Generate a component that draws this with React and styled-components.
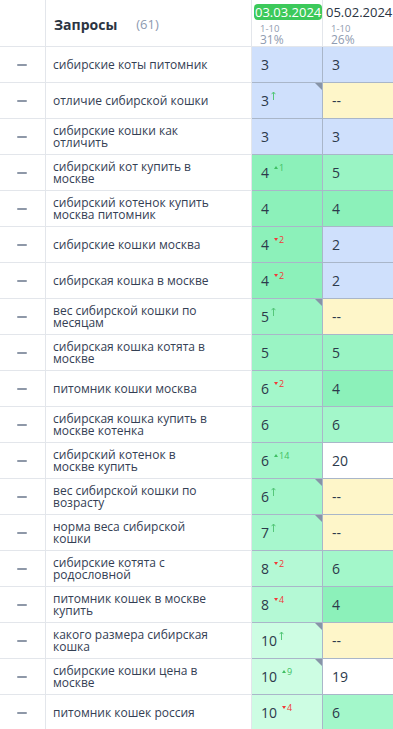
import React from "react";
import styled, { createGlobalStyle } from "styled-components";

const Global = createGlobalStyle`
  html, body { margin: 0; padding: 0; background: #ffffff; }
  body { font-family: "Open Sans", "Liberation Sans", sans-serif; }
  * { box-sizing: border-box; }
`;

const COLORS = {
  blue: "#cfe0fc",
  yellow: "#fef6c9",
  white: "#ffffff",
  g4: "#8cf1ba",
  g5: "#9af4c4",
  g6: "#a3f7ca",
  g7: "#a7f7cd",
  g8: "#b4f9d5",
  g10: "#cdfde3",
};

const LIGHT = "#e3e6eb";
const SLATE = "#a9b6c9";

const Table = styled.div`
  width: 393px;
  display: flex;
  flex-direction: column;
`;

const Grid = styled.div`
  display: grid;
  grid-template-columns: 46px 206px 71px 70px;
  height: ${(p) => p.$h}px;
`;

const HeadCell = styled.div`
  border-bottom: 1px solid ${LIGHT};
  border-right: ${(p) => (p.$last ? "none" : `1px solid ${LIGHT}`)};
  display: flex;
`;

const TitleCell = styled(HeadCell)`
  align-items: center;
  padding: 2px 0 0 8px;
`;

const Title = styled.span`
  font-weight: 700;
  font-size: 14px;
  color: #2b3442;
`;

const Count = styled.span`
  margin-left: 19px;
  font-size: 13px;
  color: #8d9ab0;
`;

const DateCell = styled(HeadCell)`
  flex-direction: column;
  padding: 4px 0 0 2px;
`;

const DateBadge = styled.span`
  align-self: flex-start;
  font-size: 13px;
  line-height: 16px;
  padding: 0 1px;
  border-radius: 4px;
  color: ${(p) => (p.$active ? "#ffffff" : "#2b3442")};
  background: ${(p) => (p.$active ? "#3cc95a" : "transparent")};
`;

const Range = styled.span`
  font-size: 9.5px;
  line-height: 11px;
  margin: 3px 0 0 6px;
  color: #8f9bb0;
`;

const Percent = styled.span`
  font-size: 12px;
  line-height: 12px;
  margin-left: 6px;
  color: #8f9bb0;
`;

const IconCell = styled.div`
  border-right: 1px solid ${LIGHT};
  border-bottom: 1px solid ${LIGHT};
  display: flex;
  align-items: center;
  justify-content: center;
  padding-right: 2px;
`;

const Dash = styled.span`
  width: 10px;
  height: 2px;
  border-radius: 1px;
  background: #8e98a8;
`;

const QueryCell = styled.div`
  border-right: 1px solid ${LIGHT};
  border-bottom: 1px solid ${LIGHT};
  display: flex;
  align-items: center;
  padding: 0 40px 0 7px;
  font-size: 12px;
  line-height: 12px;
  color: #344054;
`;

const PosCell = styled.div`
  position: relative;
  background: ${(p) => COLORS[p.$c]};
  border-bottom: 1px solid ${SLATE};
  border-right: ${(p) => (p.$last ? "none" : `1px solid ${SLATE}`)};
  display: flex;
  align-items: center;
  padding-left: 9px;
  font-size: 14px;
  color: #2c3a4b;
`;

const Corner = styled.span`
  position: absolute;
  top: 0;
  right: 0;
  width: 0;
  height: 0;
  border-top: 7px solid #8794a7;
  border-left: 7px solid transparent;
`;

const Delta = styled.sup`
  display: inline-flex;
  align-items: center;
  gap: 1px;
  margin-left: ${(p) => (p.$arrow ? 2 : 5)}px;
  font-size: 9px;
  line-height: 9px;
  vertical-align: 6px;
  color: ${(p) => (p.$up ? "#3fbf63" : "#f23838")};
`;

const Value = styled.span`
  display: inline-flex;
  align-items: flex-start;
`;

const UpArrow = () => (
  <svg width="5" height="9" viewBox="0 0 5 9">
    <path d="M2.5 9V1M0.6 3.2L2.5 1L4.4 3.2" stroke="#55c77a" strokeWidth="1" fill="none" />
  </svg>
);

const Tri = ({ up }) => (
  <svg width="4" height="3" viewBox="0 0 4 3">
    <path d={up ? "M0 3L2 0L4 3Z" : "M0 0L4 0L2 3Z"} fill="currentColor" />
  </svg>
);

const rows = [
  ["сибирские коты питомник", { v: "3", c: "blue" }, { v: "3", c: "blue" }],
  ["отличие сибирской кошки", { v: "3", c: "blue", arrow: true, corner: true }, { v: "--", c: "yellow" }],
  ["сибирские кошки как отличить", { v: "3", c: "blue" }, { v: "3", c: "blue" }],
  ["сибирский кот купить в москве", { v: "4", c: "g4", d: 1 }, { v: "5", c: "g5" }],
  ["сибирский котенок купить москва питомник", { v: "4", c: "g4" }, { v: "4", c: "g4" }],
  ["сибирские кошки москва", { v: "4", c: "g4", d: -2 }, { v: "2", c: "blue" }],
  ["сибирская кошка в москве", { v: "4", c: "g4", d: -2 }, { v: "2", c: "blue" }],
  ["вес сибирской кошки по месяцам", { v: "5", c: "g5", arrow: true, corner: true }, { v: "--", c: "yellow" }],
  ["сибирская кошка котята в москве", { v: "5", c: "g5" }, { v: "5", c: "g5" }],
  ["питомник кошки москва", { v: "6", c: "g6", d: -2 }, { v: "4", c: "g4" }],
  ["сибирская кошка купить в москве котенка", { v: "6", c: "g6" }, { v: "6", c: "g6" }],
  ["сибирский котенок в москве купить", { v: "6", c: "g6", d: 14 }, { v: "20", c: "white" }],
  ["вес сибирской кошки по возрасту", { v: "6", c: "g6", arrow: true, corner: true }, { v: "--", c: "yellow" }],
  ["норма веса сибирской кошки", { v: "7", c: "g7", arrow: true, corner: true }, { v: "--", c: "yellow" }],
  ["сибирские котята с родословной", { v: "8", c: "g8", d: -2 }, { v: "6", c: "g6" }],
  ["питомник кошек в москве купить", { v: "8", c: "g8", d: -4 }, { v: "4", c: "g4" }],
  ["какого размера сибирская кошка", { v: "10", c: "g10", arrow: true, corner: true }, { v: "--", c: "yellow" }],
  ["сибирские кошки цена в москве", { v: "10", c: "g10", d: 9, corner: true }, { v: "19", c: "white" }],
  ["питомник кошек россия", { v: "10", c: "g10", d: -4 }, { v: "6", c: "g6" }],
];

const Position = ({ cell, last }) => (
  <PosCell $c={cell.c} $last={last}>
    <Value>
      {cell.v}
      {cell.arrow && (
        <Delta $arrow $up>
          <UpArrow />
        </Delta>
      )}
      {cell.d !== undefined && (
        <Delta $up={cell.d > 0}>
          <Tri up={cell.d > 0} />
          {Math.abs(cell.d)}
        </Delta>
      )}
    </Value>
    {cell.corner && <Corner />}
  </PosCell>
);

export default function App() {
  return (
    <>
      <Global />
      <Table>
        <Grid $h={47}>
          <HeadCell />
          <TitleCell>
            <Title>Запросы</Title>
            <Count>(61)</Count>
          </TitleCell>
          <DateCell>
            <DateBadge $active>03.03.2024</DateBadge>
            <Range>1-10</Range>
            <Percent>31%</Percent>
          </DateCell>
          <DateCell $last>
            <DateBadge>05.02.2024</DateBadge>
            <Range>1-10</Range>
            <Percent>26%</Percent>
          </DateCell>
        </Grid>
        {rows.map(([q, a, b], i) => (
          <Grid key={i} $h={36}>
            <IconCell>
              <Dash />
            </IconCell>
            <QueryCell>{q}</QueryCell>
            <Position cell={a} />
            <Position cell={b} last />
          </Grid>
        ))}
      </Table>
    </>
  );
}
